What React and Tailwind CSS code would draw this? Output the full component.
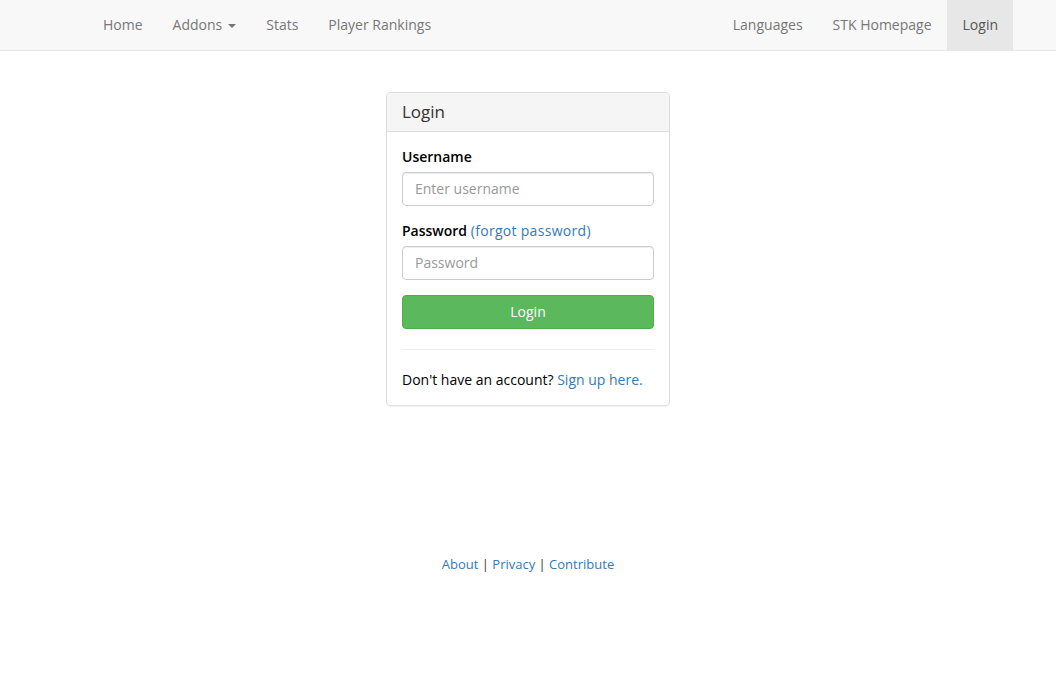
export default function App() {
  const navLink = 'block px-[15px] py-[15px] leading-5 text-[#777]';
  return (
    <div className="min-h-screen bg-white text-[14px] text-[#333] font-['Open_Sans',sans-serif]">
      <nav className="h-[51px] bg-[#f8f8f8] border-b border-[#e7e7e7]">
        <div className="mx-[43px] flex justify-between">
          <ul className="flex pl-[45px]">
            <li><a className={navLink}>Home</a></li>
            <li>
              <a className={navLink + ' flex items-center'}>
                Addons
                <span className="ml-[6px] mt-[1px] w-0 h-0 border-x-[4px] border-x-transparent border-t-[4px] border-t-[#777]"></span>
              </a>
            </li>
            <li><a className={navLink}>Stats</a></li>
            <li><a className={navLink}>Player Rankings</a></li>
          </ul>
          <ul className="flex">
            <li><a className={navLink}>Languages</a></li>
            <li><a className={navLink}>STK Homepage</a></li>
            <li><a className="block pl-[16px] pr-[15px] py-[15px] leading-5 text-[#555] bg-[#e7e7e7]">Login</a></li>
          </ul>
        </div>
      </nav>

      <div className="flex justify-center pt-[41px]">
        <div className="w-[284px] border border-[#ddd] rounded-[4px] shadow-[0_1px_1px_rgba(0,0,0,0.05)]">
          <div className="px-[15px] py-[10px] bg-[#f5f5f5] border-b border-[#ddd] rounded-t-[3px]">
            <h3 className="text-[17px] leading-[18px] text-[#333]">Login</h3>
          </div>
          <div className="p-[15px] leading-5">
            <div className="mb-[15px]">
              <label className="block mb-[5px] font-semibold text-black">Username</label>
              <input
                className="block w-full h-[34px] px-3 pt-[5px] pb-[7px] border border-[#ccc] rounded-[4px] text-[14px] placeholder-[#999] outline-none shadow-[inset_0_1px_1px_rgba(0,0,0,0.075)]"
                placeholder="Enter username"
              />
            </div>
            <div className="mb-[15px]">
              <label className="block mb-[5px] font-semibold text-black">
                Password{' '}
                <a className="font-normal tracking-[0.3px] text-[#337ab7]">(forgot password)</a>
              </label>
              <input
                type="password"
                className="block w-full h-[34px] px-3 pt-[5px] pb-[7px] border border-[#ccc] rounded-[4px] text-[14px] placeholder-[#999] outline-none shadow-[inset_0_1px_1px_rgba(0,0,0,0.075)]"
                placeholder="Password"
              />
            </div>
            <button className="block w-full h-[34px] bg-[#5cb85c] border border-[#4cae4c] rounded-[4px] text-white text-[14px]">
              Login
            </button>
            <hr className="my-5 border-t border-[#eee]" />
            <p className="text-black">
              Don't have an account? <a className="text-[#337ab7]">Sign up here.</a>
            </p>
          </div>
        </div>
      </div>

      <footer className="mt-[148px] text-center text-[13px] leading-5">
        <a className="text-[#337ab7]">About</a>
        <span className="text-[#333]"> | </span>
        <a className="text-[#337ab7]">Privacy</a>
        <span className="text-[#333]"> | </span>
        <a className="text-[#337ab7]">Contribute</a>
      </footer>
    </div>
  );
}
